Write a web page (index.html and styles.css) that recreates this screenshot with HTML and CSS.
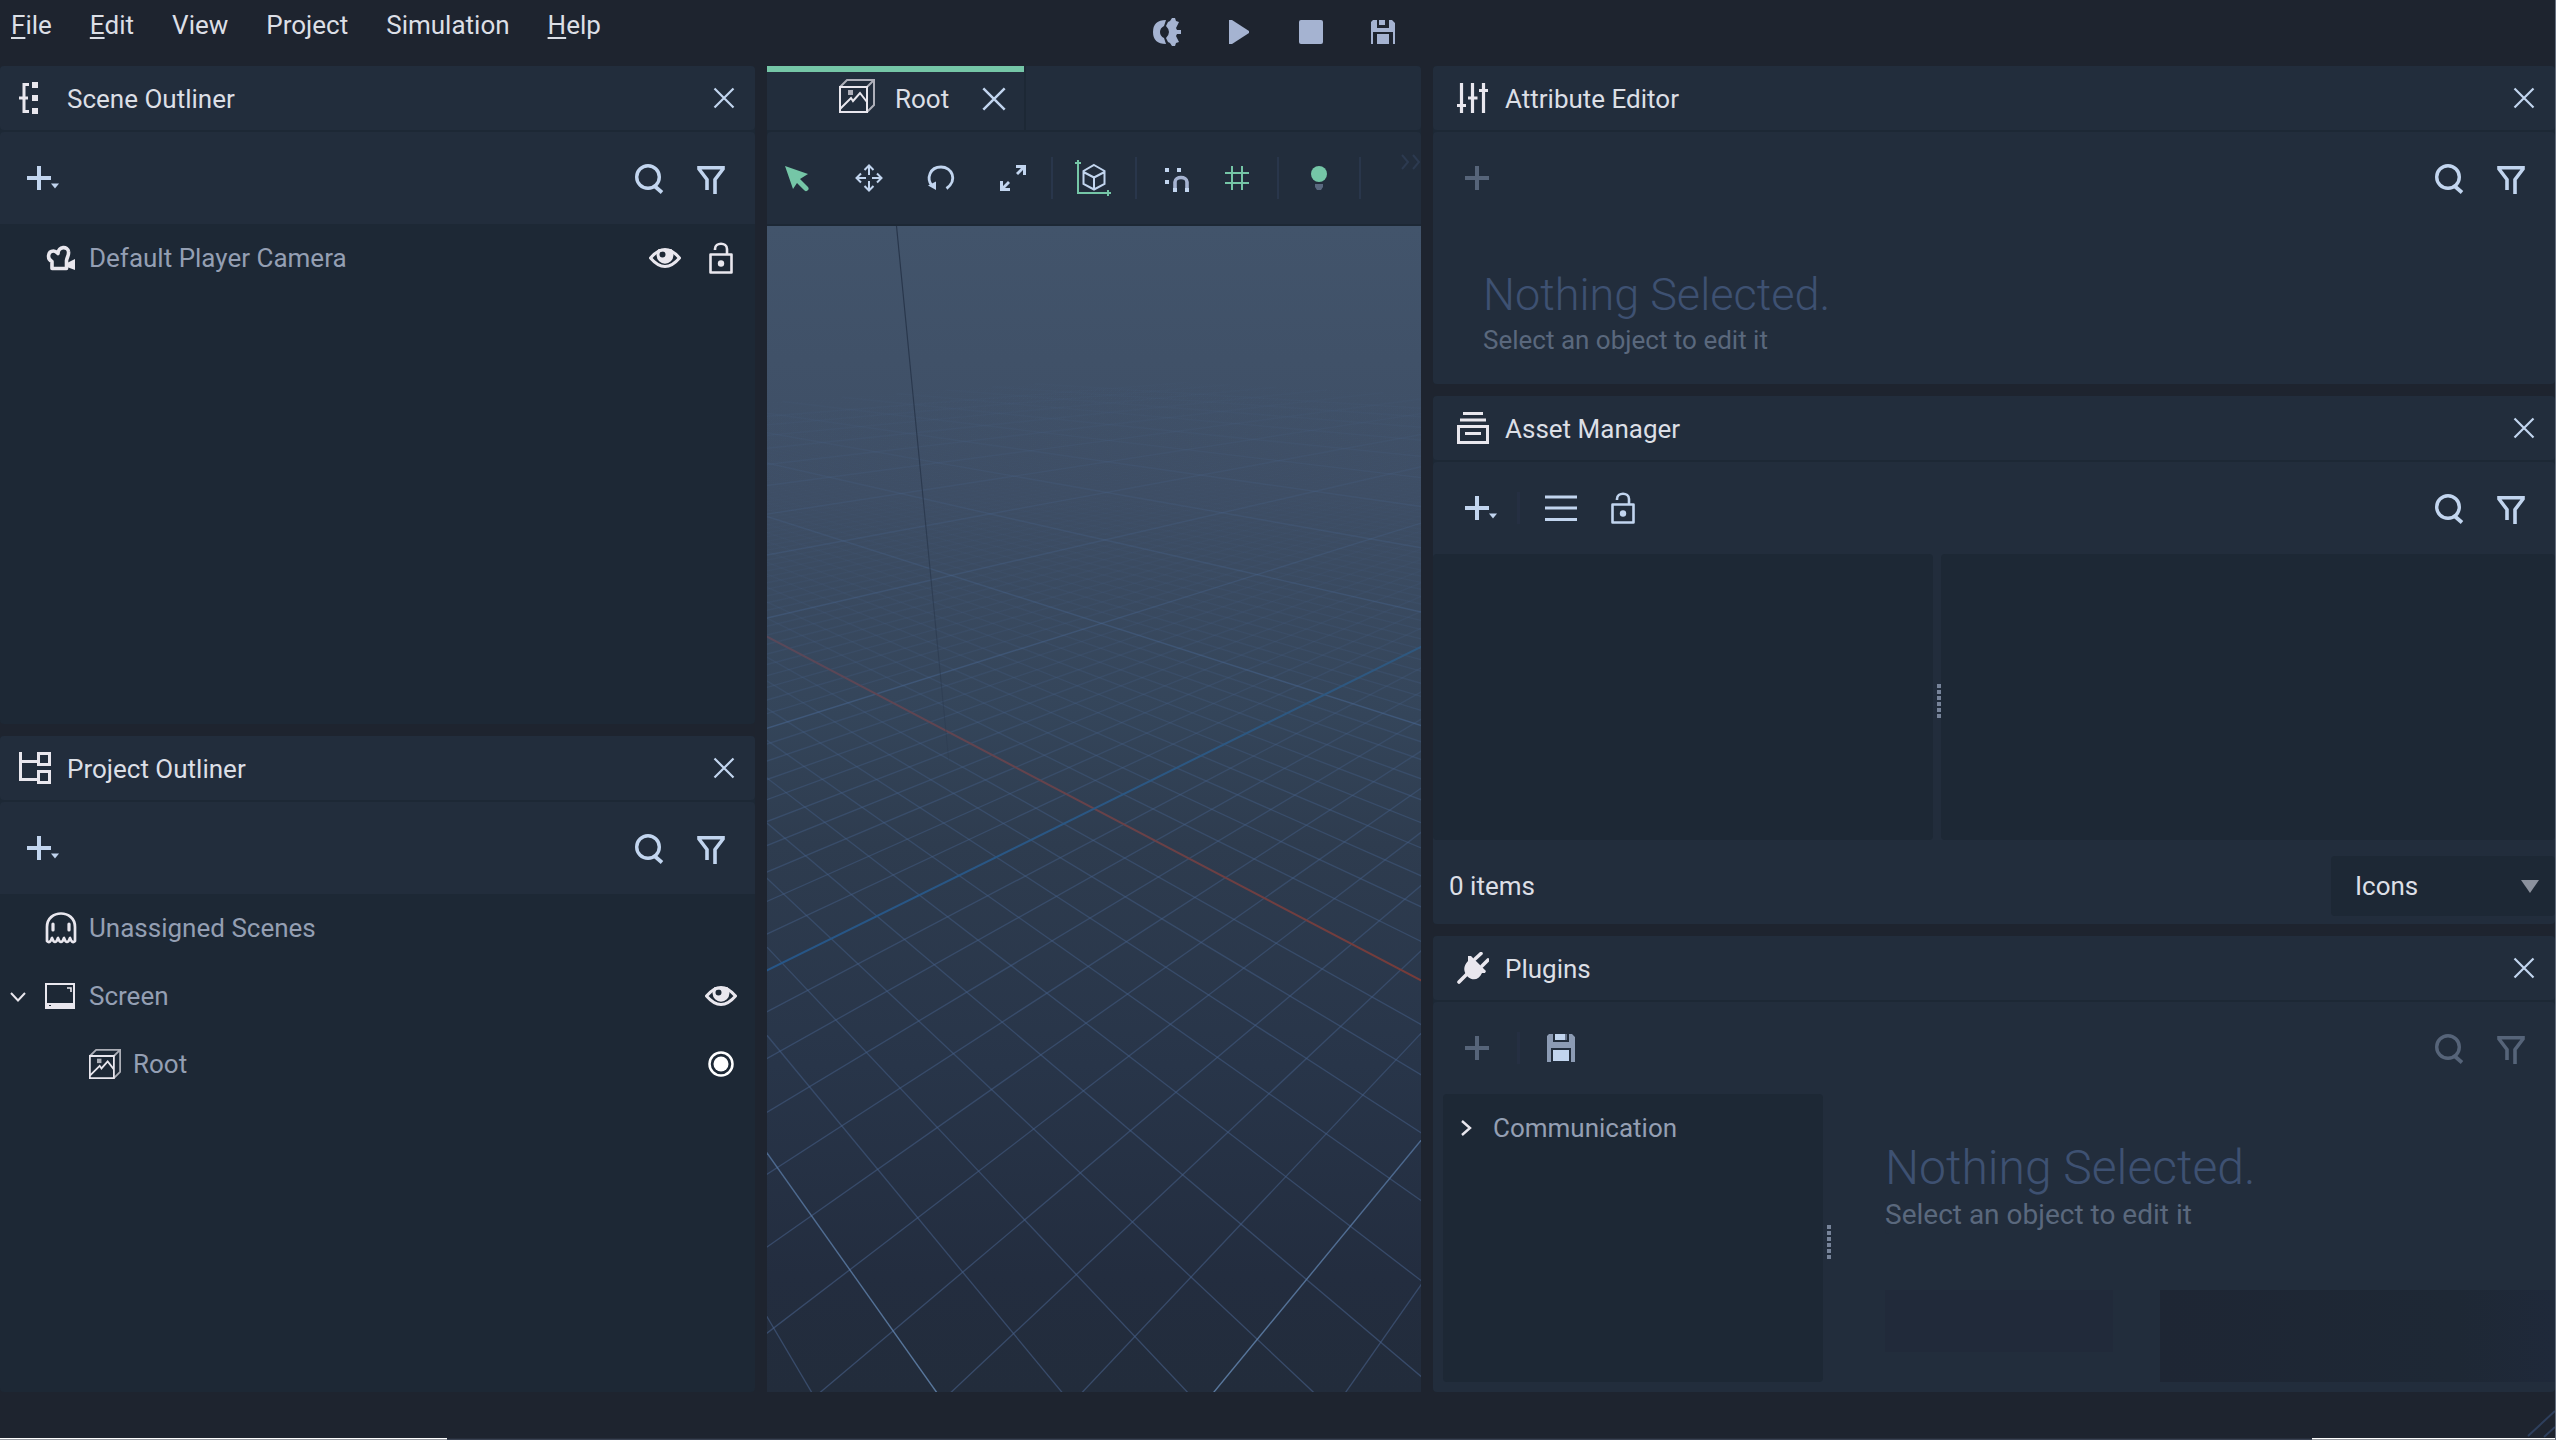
FILE: index.html
```
<!DOCTYPE html>
<html lang="en">
<head>
<meta charset="utf-8">
<meta name="viewport" content="width=device-width, initial-scale=1">
<title>Scene Editor</title>
<link rel="stylesheet" href="styles.css">
</head>
<body>
<svg class="sprite" aria-hidden="true">
  <symbol id="i-close" viewBox="0 0 32 32"><path d="M6.5 6.5l19 19M25.5 6.5l-19 19" fill="none" stroke="currentColor" stroke-width="2.2"/></symbol>
  <symbol id="i-search" viewBox="0 0 32 32"><circle cx="15" cy="15" r="11.3" fill="none" stroke="currentColor" stroke-width="3.4"/><path d="M21.5 24l7.500 6.500" stroke="currentColor" stroke-width="3.800"/></symbol>
  <symbol id="i-filter" viewBox="0 0 32 32"><path d="M12 28V17.500L4 7V5.700H28V7L20 17.500V32" fill="none" stroke="currentColor" stroke-width="3.600"/></symbol>
  <symbol id="i-plus" viewBox="0 0 40 32"><path d="M16 4v24M4 16h24" stroke="currentColor" stroke-width="4"/></symbol>
  <symbol id="i-plus-menu" viewBox="0 0 40 32"><path d="M16 4v24M4 16h24" stroke="currentColor" stroke-width="4"/><path d="M28 21.500h8l-4 5z" fill="currentColor"/></symbol>
  <symbol id="i-scene" viewBox="0 0 32 32"><path d="M10 2.500H5v27h5M0 16h9" fill="none" stroke="currentColor" stroke-width="3"/><path d="M13 0h6v6h-6zM13 13h6v6h-6zM13 26h6v6h-6z" fill="currentColor"/></symbol>
  <symbol id="i-project" viewBox="0 0 32 32"><path d="M1.500 0v27.500H18M1.500 9.500H18M19.500 1.500h11v11h-11zM19.500 19.500h11v11h-11z" fill="none" stroke="currentColor" stroke-width="3"/></symbol>
  <symbol id="i-sliders" viewBox="0 0 32 32"><path d="M4.500 1v30M15.500 1v30M26.500 1v30M0 23.500h9M11 16h9.500M22 8.500h9" fill="none" stroke="currentColor" stroke-width="3.200"/></symbol>
  <symbol id="i-assets" viewBox="0 0 32 32"><path d="M6 1.500h20M3 8h26M1.500 14.500h29v16h-29zM8 21.500h16" fill="none" stroke="currentColor" stroke-width="3"/></symbol>
  <symbol id="i-plug" viewBox="0 0 32 32"><path d="M2 30L12 20M18 7l6-5.500M25 14l6-6" stroke="currentColor" stroke-width="3.600" stroke-linecap="round"/><path d="M11 4l3 0 15 15-1 2-3 0c-3 7-9 8-14 4-5-5-5-11 0-16z" fill="currentColor"/></symbol>
  <symbol id="i-camera" viewBox="0 0 32 32"><path d="M7 26.500v-7C2 17.500 2.500 9 8.500 9c2 0 3 1 4.500 2.500C13 4 23 4 23.500 9.500c.5 4-1.500 5.500-2 9v8z" fill="none" stroke="currentColor" stroke-width="3.600" stroke-linejoin="round"/><path d="M22 21l8-4v11l-8-3z" fill="currentColor"/></symbol>
  <symbol id="i-eye" viewBox="0 0 32 32"><path d="M1.500 16Q16-1 30.500 16 16 33 1.500 16z" fill="none" stroke="currentColor" stroke-width="3"/><path fill-rule="evenodd" d="M9.500 7h13a8.500 9 0 1 1-13 0zM10.500 12.500a3 3 0 1 0 6 0 3 3 0 1 0-6 0z" fill="currentColor"/></symbol>
  <symbol id="i-lock" viewBox="0 0 32 32"><path d="M5.500 12.500h21v18h-21zM10 8V7C10 0 22 0 22 7v5" fill="none" stroke="currentColor" stroke-width="2.600" stroke-linejoin="round"/><circle cx="16" cy="21.500" r="3.200" fill="currentColor"/></symbol>
  <symbol id="i-ghost" viewBox="0 0 32 32"><path d="M2 29V15C2-3 30-3 30 15v14q-3 3-5-3-3 8-6 0-3 8-6 0-3 8-6 0-2 6-5 3z" fill="none" stroke="currentColor" stroke-width="2.700" stroke-linejoin="round"/><path d="M8 12v6M24 12v6" stroke="currentColor" stroke-width="3.200" stroke-linecap="round"/></symbol>
  <symbol id="i-screen" viewBox="0 0 32 32"><path d="M1 4h28v23H1z" fill="none" stroke="currentColor" stroke-width="2"/><path fill-rule="evenodd" d="M0 23h30v6H0zM4 25h2v2H4z" fill="currentColor"/><path d="M22 8h4v4" fill="none" stroke="currentColor" stroke-width="1.600"/></symbol>
  <symbol id="i-box" viewBox="0 0 36 36"><path d="M1 9L8 2h27v25l-7 7M28 9l7-7" fill="none" stroke="currentColor" stroke-width="2" opacity=".7"/><path d="M1 9h27v25H1zM1 31l11-11 2 3 7-8 7 9" fill="none" stroke="currentColor" stroke-width="2"/><path d="M9 12h5v5H9z" fill="currentColor" opacity=".7"/></symbol>
  <symbol id="i-down" viewBox="0 0 20 20"><path d="M3 7l7 7.500L17 7" fill="none" stroke="currentColor" stroke-width="2"/></symbol>
  <symbol id="i-right" viewBox="0 0 20 20"><path d="M6 3l8 7-8 7" fill="none" stroke="currentColor" stroke-width="2.400"/></symbol>
  <symbol id="i-radio" viewBox="0 0 32 32"><circle cx="16" cy="16" r="11.500" fill="none" stroke="currentColor" stroke-width="2.500"/><circle cx="16" cy="16" r="7.500" fill="currentColor"/></symbol>
  <symbol id="i-menu" viewBox="0 0 32 32"><path d="M0 5h32M0 16h32M0 27.500h32" stroke="currentColor" stroke-width="3"/></symbol>
  <symbol id="i-save" viewBox="0 0 32 32"><path fill-rule="evenodd" d="M6 4h4v8h12V4h3l3 3v21h-2V16H6v12H4V6z" fill="currentColor"/><path d="M12 4h6v5h-6zM10 18h12v10H10z" fill="currentColor"/></symbol>
  <symbol id="i-save-tone" viewBox="0 0 32 32"><path d="M4 2h4v8h16V2h3l3 3v25h-4V16H6v14H2V4z" fill="#8c9bb4"/><path d="M10 2h12v6H10zM8 18h16v11H8z" fill="currentColor"/><path d="M20 2h2v6h-2z" fill="#66748b"/></symbol>
  <symbol id="i-build" viewBox="0 0 32 32"><path d="M15 4Q2 4 2 16 2 28 15 28L13 22Q9 20 9 16 9 12 13 10z" fill="currentColor"/><path d="M17 6l2-1 2-3h3l1 3 3 1-3 6 1 2h4v4h-4l-1 2 3 6-3 1-1 3h-3l-2-3-2-1-2-4Q21 16 15 10z" fill="currentColor"/></symbol>
  <symbol id="i-play" viewBox="0 0 32 32"><path d="M6 4h3l17 11v2L9 28H6z" fill="currentColor"/></symbol>
  <symbol id="i-stop" viewBox="0 0 32 32"><rect x="4" y="4" width="24" height="24" rx="2" fill="currentColor"/></symbol>
  <symbol id="i-select" viewBox="0 0 32 32"><path d="M4 4l23 8-8 5 8 8a2 2 0 0 1-4 3l-7-7-4 6z" fill="currentColor"/></symbol>
  <symbol id="i-move" viewBox="0 0 32 32"><path d="M16 4v9M16 19v9M4 16h9M19 16h9M11.500 8L16 3.500 20.500 8M11.500 24l4.500 4.500 4.500-4.500M8 11.500L3.500 16 8 20.500M24 11.500l4.500 4.500-4.500 4.500" fill="none" stroke="currentColor" stroke-width="2"/></symbol>
  <symbol id="i-rotate" viewBox="0 0 32 32"><path d="M21.500 26.500C33 18 27 5 16 5 5 5 1 16 7 24" fill="none" stroke="currentColor" stroke-width="2.800"/><path d="M3 23.500l8-4v8.500z" fill="currentColor"/></symbol>
  <symbol id="i-scale" viewBox="0 0 32 32"><path d="M19 3h10v10h-3V8l-5 5-2-2 5-5h-5zM3 19h3v5l5-5 2 2-5 5h5v3H3z" fill="currentColor"/></symbol>
  <symbol id="i-local" viewBox="0 0 36 36"><path d="M3 0v33h33M0 3h6M33 30v6" fill="none" stroke="#75c6a7" stroke-width="2"/><path d="M19 5l10.500 6v13L19 29.500 8.500 24V11zM8.500 12L19 17.500 29.500 12M19 17v12" fill="none" stroke="currentColor" stroke-width="2"/></symbol>
  <symbol id="i-snap" viewBox="0 0 32 32"><path d="M4 6h4v4H4zM16 6h4v4h-4zM4 18h4v4H4zM12 26h4v4h-4zM24 26h4v4h-4z" fill="currentColor"/><path d="M14 26v-6C14 14 26 14 26 20v6" fill="none" stroke="#a5b3d1" stroke-width="3.600"/></symbol>
  <symbol id="i-grid" viewBox="0 0 32 32"><path d="M11 4v24M21 4v24M4 11h24M4 21h24" stroke="currentColor" stroke-width="2"/></symbol>
  <symbol id="i-bulb" viewBox="0 0 32 32"><circle cx="16" cy="12" r="8" fill="currentColor"/><path d="M12 22h8v3l-2 3h-4l-2-3z" fill="#5a687f"/></symbol>
  <symbol id="i-more" viewBox="0 0 20 16"><path d="M1 1l6 7-6 7M12 1l6 7-6 7" fill="none" stroke="currentColor" stroke-width="2"/></symbol>
</svg>

<header class="topbar">
  <nav class="menu" aria-label="Main menu">
    <button><u>F</u>ile</button><button><u>E</u>dit</button><button>View</button><button>Project</button><button>Simulation</button><button><u>H</u>elp</button>
  </nav>
  <div class="playbar">
    <button aria-label="Build"><svg class="icon"><use href="#i-build"/></svg></button>
    <button aria-label="Play"><svg class="icon"><use href="#i-play"/></svg></button>
    <button aria-label="Stop"><svg class="icon"><use href="#i-stop"/></svg></button>
    <button aria-label="Save"><svg class="icon"><use href="#i-save"/></svg></button>
  </div>
</header>

<main class="workspace">
  <div class="column column-left">
    <section class="panel">
      <header class="panel-head">
        <svg class="icon"><use href="#i-scene"/></svg><h2>Scene Outliner</h2>
        <button class="push" aria-label="Close"><svg class="icon"><use href="#i-close"/></svg></button>
      </header>
      <div class="toolbar">
        <button aria-label="Add"><svg class="icon icon-wide"><use href="#i-plus-menu"/></svg></button>
        <button class="push" aria-label="Search"><svg class="icon"><use href="#i-search"/></svg></button>
        <button aria-label="Filter"><svg class="icon"><use href="#i-filter"/></svg></button>
      </div>
      <ul class="tree">
        <li class="row"><span class="twisty"></span><svg class="icon"><use href="#i-camera"/></svg><span>Default Player Camera</span>
          <button class="push" aria-label="Visibility"><svg class="icon"><use href="#i-eye"/></svg></button>
          <button aria-label="Lock"><svg class="icon"><use href="#i-lock"/></svg></button></li>
      </ul>
    </section>
    <section class="panel">
      <header class="panel-head">
        <svg class="icon"><use href="#i-project"/></svg><h2>Project Outliner</h2>
        <button class="push" aria-label="Close"><svg class="icon"><use href="#i-close"/></svg></button>
      </header>
      <div class="toolbar">
        <button aria-label="Add"><svg class="icon icon-wide"><use href="#i-plus-menu"/></svg></button>
        <button class="push" aria-label="Search"><svg class="icon"><use href="#i-search"/></svg></button>
        <button aria-label="Filter"><svg class="icon"><use href="#i-filter"/></svg></button>
      </div>
      <ul class="tree">
        <li class="row"><span class="twisty"></span><svg class="icon"><use href="#i-ghost"/></svg><span>Unassigned Scenes</span></li>
        <li class="row"><button class="twisty" aria-label="Collapse"><svg><use href="#i-down"/></svg></button><svg class="icon"><use href="#i-screen"/></svg><span>Screen</span>
          <button class="push" aria-label="Visibility"><svg class="icon"><use href="#i-eye"/></svg></button></li>
        <li class="row row-child"><span class="twisty"></span><svg class="icon"><use href="#i-box"/></svg><span>Root</span>
          <button class="push active" aria-label="Active scene"><svg class="icon"><use href="#i-radio"/></svg></button></li>
      </ul>
    </section>
  </div>

  <section class="panel editor">
    <div class="tabs">
      <div class="tab"><svg class="icon icon-box"><use href="#i-box"/></svg><h2>Root</h2><button aria-label="Close tab"><svg class="icon icon-tab"><use href="#i-close"/></svg></button></div>
      <div class="tab-rest"></div>
    </div>
    <div class="toolbar tools">
      <div class="tool-group transform">
        <button class="on" aria-label="Select"><svg class="icon"><use href="#i-select"/></svg></button>
        <button aria-label="Move"><svg class="icon"><use href="#i-move"/></svg></button>
        <button aria-label="Rotate"><svg class="icon"><use href="#i-rotate"/></svg></button>
        <button aria-label="Scale"><svg class="icon"><use href="#i-scale"/></svg></button>
      </div>
      <div class="tool-group"><button aria-label="Local axes"><svg class="icon icon-box"><use href="#i-local"/></svg></button></div>
      <div class="tool-group snapping">
        <button aria-label="Snap"><svg class="icon"><use href="#i-snap"/></svg></button>
        <button class="on" aria-label="Grid"><svg class="icon"><use href="#i-grid"/></svg></button>
      </div>
      <div class="tool-group"><button class="on" aria-label="Lights"><svg class="icon"><use href="#i-bulb"/></svg></button></div>
      <button class="more push" aria-label="More tools"><svg><use href="#i-more"/></svg></button>
    </div>
    <div class="viewport">
      <svg id="scene" viewBox="767 226 654 1166" preserveAspectRatio="xMidYMid slice" role="img" aria-label="Scene viewport">
        <defs>
          <linearGradient id="minor" gradientUnits="userSpaceOnUse" x1="0" y1="330" x2="0" y2="1392">
            <stop offset="0" stop-color="#455f86" stop-opacity="0"/><stop offset=".15" stop-color="#455f86" stop-opacity=".03"/><stop offset=".3" stop-color="#45608a" stop-opacity=".2"/><stop offset=".45" stop-color="#45618c" stop-opacity=".42"/><stop offset="1" stop-color="#47608a" stop-opacity=".6"/>
          </linearGradient>
          <linearGradient id="major" gradientUnits="userSpaceOnUse" x1="0" y1="360" x2="0" y2="1392">
            <stop offset="0" stop-color="#4b6c9c" stop-opacity="0"/><stop offset=".2" stop-color="#4b6c9c" stop-opacity=".25"/><stop offset=".4" stop-color="#4b6c9c" stop-opacity=".55"/><stop offset="1" stop-color="#5f80a8" stop-opacity=".9"/>
          </linearGradient>
          <linearGradient id="axis-x" gradientUnits="userSpaceOnUse" x1="0" y1="630" x2="0" y2="990"><stop offset="0" stop-color="#58485a"/><stop offset="1" stop-color="#783b38"/></linearGradient>
          <linearGradient id="axis-z" gradientUnits="userSpaceOnUse" x1="0" y1="640" x2="0" y2="970"><stop offset="0" stop-color="#2f587f"/><stop offset="1" stop-color="#265688"/></linearGradient>
          <linearGradient id="axis-y" gradientUnits="userSpaceOnUse" x1="0" y1="226" x2="0" y2="760"><stop offset="0" stop-color="#27354a"/><stop offset=".5" stop-color="#27354a" stop-opacity=".8"/><stop offset="1" stop-color="#27354a" stop-opacity=".25"/></linearGradient>
        </defs>
      </svg>
    </div>
  </section>

  <div class="column column-right">
    <section class="panel">
      <header class="panel-head">
        <svg class="icon"><use href="#i-sliders"/></svg><h2>Attribute Editor</h2>
        <button class="push" aria-label="Close"><svg class="icon"><use href="#i-close"/></svg></button>
      </header>
      <div class="toolbar">
        <button disabled aria-label="Add"><svg class="icon icon-wide"><use href="#i-plus"/></svg></button>
        <button class="push" aria-label="Search"><svg class="icon"><use href="#i-search"/></svg></button>
        <button aria-label="Filter"><svg class="icon"><use href="#i-filter"/></svg></button>
      </div>
      <div class="empty"><h3>Nothing Selected.</h3><p>Select an object to edit it</p></div>
    </section>

    <section class="panel">
      <header class="panel-head">
        <svg class="icon"><use href="#i-assets"/></svg><h2>Asset Manager</h2>
        <button class="push" aria-label="Close"><svg class="icon"><use href="#i-close"/></svg></button>
      </header>
      <div class="toolbar">
        <button aria-label="Add"><svg class="icon icon-wide"><use href="#i-plus-menu"/></svg></button>
        <span class="rule"></span>
        <button aria-label="List"><svg class="icon"><use href="#i-menu"/></svg></button>
        <button aria-label="Lock"><svg class="icon"><use href="#i-lock"/></svg></button>
        <button class="push" aria-label="Search"><svg class="icon"><use href="#i-search"/></svg></button>
        <button aria-label="Filter"><svg class="icon"><use href="#i-filter"/></svg></button>
      </div>
      <div class="assets"><div class="well"></div><div class="splitter"><i class="grip"></i></div><div class="well"></div></div>
      <footer class="asset-foot">
        <label for="view-mode">0 items</label>
        <div class="select"><select id="view-mode"><option>Icons</option><option>List</option></select></div>
      </footer>
    </section>

    <section class="panel">
      <header class="panel-head">
        <svg class="icon"><use href="#i-plug"/></svg><h2>Plugins</h2>
        <button class="push" aria-label="Close"><svg class="icon"><use href="#i-close"/></svg></button>
      </header>
      <div class="toolbar">
        <button disabled aria-label="Add"><svg class="icon icon-wide"><use href="#i-plus"/></svg></button>
        <span class="rule"></span>
        <button aria-label="Save"><svg class="icon"><use href="#i-save-tone"/></svg></button>
        <button disabled class="push" aria-label="Search"><svg class="icon"><use href="#i-search"/></svg></button>
        <button disabled aria-label="Filter"><svg class="icon"><use href="#i-filter"/></svg></button>
      </div>
      <div class="plugins">
        <ul class="well plugin-list"><li class="row"><button class="twisty" aria-label="Expand"><svg><use href="#i-right"/></svg></button><span>Communication</span></li></ul>
        <div class="splitter"><i class="grip"></i></div>
        <div class="plugin-detail">
          <div class="empty empty-large"><h3>Nothing Selected.</h3><p>Select an object to edit it</p></div>
          <div class="fields"><div class="field-label"></div><div class="field-value"></div></div>
        </div>
      </div>
    </section>
  </div>
</main>

<footer class="status">
  <svg class="resize" viewBox="0 0 28 28" aria-hidden="true"><path d="M1 26L28 1M17 27l11-10" stroke="#2e3f5c" stroke-width="2"/></svg>
  <div class="edge"><span class="edge-left"></span><span class="edge-right"></span></div>
</footer>
<script src="scene.js"></script>
</body>
</html>
```
FILE: styles.css
```
:root {
  --bg: #1e242f;
  --panel: #222d3c;
  --well: #1d2835;
  --text: #dcdfe6;
  --muted: #949fb3;
  --tool: #c2d5ef;
  --icon: #e9e7ee;
  --green: #75c6a7;
  --disabled: #566479;
}
* { box-sizing: border-box; }
body {
  margin: 0;
  min-height: 100vh;
  display: flex;
  flex-direction: column;
  background: var(--bg);
  color: var(--text);
  font: 400 26px/32px Roboto, sans-serif;
  border-right: 1px solid #687180;
}
h2, h3, p, ul { margin: 0; padding: 0; font: inherit; }
ul { list-style: none; }
button { margin: 0; padding: 0; border: 0; background: none; color: inherit; font: inherit; display: flex; align-items: center; }
svg { display: block; }
.sprite { display: none; }
.icon { width: 32px; height: 32px; flex: none; }
.icon-wide { width: 40px; }
.icon-box { width: 36px; height: 36px; }
.icon-tab { width: 36px; height: 36px; }
.push { margin-left: auto; }

.topbar { display: grid; grid-template-columns: 1fr auto 1fr; height: 66px; padding: 0 16px 0 11px; }
.menu { display: flex; gap: 38px; height: 50px; }
.menu u { text-decoration-thickness: 2px; text-underline-offset: 3px; text-decoration-skip-ink: none; }
.playbar { display: flex; gap: 40px; height: 64px; color: #a5b3d1; }

.workspace { flex: 1; display: grid; grid-template-columns: 755fr 654fr 1122fr; gap: 12px; }
.column { display: grid; gap: 12px; min-width: 0; }
.column-left { grid-template-rows: 658fr 656fr; }
.column-right { grid-template-rows: 318fr 528fr 456fr; }
.panel { display: flex; flex-direction: column; min-width: 0; background: var(--well); border-radius: 4px; }
.panel-head { display: flex; align-items: center; gap: 16px; height: 64px; padding: 0 15px 0 24px; margin-bottom: 2px; background: var(--panel); border-radius: 4px; }
.panel-head h2 { padding-top: 2px; }
.panel-head .icon { color: var(--icon); }
.panel-head button .icon { color: var(--tool); }
.toolbar { display: flex; align-items: center; gap: 30px; height: 92px; padding: 0 28px; background: var(--panel); color: var(--tool); border-radius: 4px 4px 0 0; }
.column-left .panel-head { padding-left: 19px; }
.column-left .toolbar { padding-left: 23px; }
.toolbar button:disabled { color: var(--disabled); }
.rule { width: 3px; height: 32px; margin: 0 -5px 0 -14px; background: #252f42; }

.row { display: flex; align-items: center; height: 68px; padding: 0 18px 0 8px; color: var(--muted); }
.row .icon { margin-right: 12px; color: var(--icon); }
.row button .icon { margin-right: 0; }
.row button + button { margin-left: 24px; }
.row .active .icon { color: #fff; }
.row-child { padding-left: 52px; }
.twisty { width: 20px; height: 20px; margin-right: 17px; color: var(--icon); }
.twisty svg { width: 20px; height: 20px; }

.tabs { display: flex; gap: 2px; height: 64px; margin-bottom: 2px; }
.tab { display: flex; align-items: center; width: 257px; padding-left: 72px; background: var(--panel); border-top: 6px solid var(--green); }
.tab h2 { margin: 0 27px 0 20px; padding-bottom: 4px; }
.tab .icon { margin-bottom: 10px; color: var(--icon); }
.tab button .icon { margin-bottom: 4px; color: var(--tool); }
.tab-rest { flex: 1; background: var(--panel); border-radius: 0 4px 4px 0; }
.tools { gap: 0; padding: 0 0 0 14px; margin-bottom: 2px; }
.tool-group { display: flex; align-items: center; height: 42px; padding-right: 24px; margin-right: 24px; border-right: 2px solid #29364b; }
.transform { gap: 40px; padding-right: 22px; margin-right: 22px; }
.snapping { gap: 28px; }
.on { color: var(--green); }
.more { align-self: flex-start; margin-top: 22px; color: #2c3a50; }
.more svg { width: 20px; height: 16px; }
.viewport { flex: 1; position: relative; overflow: hidden; background: linear-gradient(#42546b 0%, #3e4e65 23%, #34455a 42%, #2e3c4f 53%, #283549 72%, #232d3f 90%, #222c3b 100%); }
.viewport svg { position: absolute; inset: 0; width: 100%; height: 100%; }

.empty { flex: 1; padding: 44px 0 0 50px; background: var(--panel); border-radius: 0 0 4px 4px; }
.empty h3 { font-weight: 300; font-size: 45px; line-height: 54px; color: #3e5172; }
.empty p { line-height: 36px; color: #5a687d; }
.empty-large { flex: none; padding: 46px 0 0; }
.empty-large h3 { font-size: 48px; line-height: 56px; }
.empty-large p { font-size: 28px; line-height: 38px; }

.assets { flex: 1; display: grid; grid-template-columns: 500fr 8px 614fr; background: var(--panel); }
.well { background: var(--well); border-radius: 4px; }
.splitter { display: flex; align-items: center; justify-content: flex-end; padding-top: 8px; }
.grip { width: 4px; height: 34px; background: repeating-linear-gradient(#77849a 0 4px, transparent 4px 6px); }
.asset-foot { display: flex; align-items: center; justify-content: space-between; height: 84px; padding: 8px 0 0 16px; background: var(--panel); border-radius: 0 0 4px 4px; }
.select { position: relative; width: 224px; height: 60px; }
.select select { appearance: none; width: 100%; height: 100%; padding: 0 24px; border: 0; border-radius: 4px; background: var(--well); color: var(--text); font: inherit; }
.select::after { content: ""; position: absolute; right: 16px; top: 24px; width: 18px; height: 13px; background: #8b919d; clip-path: polygon(0 0, 100% 0, 50% 100%); pointer-events: none; }

.plugins { flex: 1; display: flex; padding: 0 0 10px 10px; background: var(--panel); border-radius: 0 0 4px 4px; }
.plugin-list { width: 380px; }
.plugin-list .row { padding-left: 13px; }
.plugins .splitter { width: 8px; }
.plugin-detail { flex: 1; display: flex; flex-direction: column; justify-content: space-between; padding-left: 54px; }
.fields { display: flex; justify-content: space-between; height: 92px; }
.field-label { width: 34%; height: 62px; background: #212a3a; }
.field-value { width: 59%; background: linear-gradient(90deg, #1e2634, #1e2835 75%, #1f293a); }

.status { height: 48px; display: flex; flex-direction: column; justify-content: flex-end; align-items: flex-end; }
.resize { width: 28px; height: 28px; }
.edge { align-self: stretch; display: flex; justify-content: space-between; height: 2px; background: linear-gradient(#262d3a 50%, #3a4252 50%); }
.edge-left { width: 17.500%; background: linear-gradient(#fff 50%, #9a9da3 50%); }
.edge-right { width: 9.500%; background: linear-gradient(#fff 50%, #9a9da3 50%); }
```
FILE: scene.js
```
// Perspective floor grid: world cells (i, j) are projected to the viewport plane.
const svg = document.getElementById('scene');

const depth = (i, j) => 1 - 0.0315 * i - 0.0295 * j;
const project = (i, j) => {
  const w = depth(i, j);
  return [(1094.3 - 5.8 * i - 62.1 * j) / w, (808.6 - 10.4 * i - 9.1 * j) / w];
};

function segment(a, b, stroke, width) {
  const line = document.createElementNS('http://www.w3.org/2000/svg', 'line');
  line.setAttribute('x1', a[0].toFixed(1));
  line.setAttribute('y1', a[1].toFixed(1));
  line.setAttribute('x2', b[0].toFixed(1));
  line.setAttribute('y2', b[1].toFixed(1));
  line.setAttribute('stroke', stroke);
  line.setAttribute('stroke-width', width);
  svg.appendChild(line);
}

const FAR = -120;
const NEAR_DEPTH = 0.15;

function gridLine(k, stroke, width, alongI) {
  // The near end stops where the line comes too close to the camera.
  const limit = alongI ? (1 - 0.0295 * k - NEAR_DEPTH) / 0.0315 : (1 - 0.0315 * k - NEAR_DEPTH) / 0.0295;
  if (limit <= FAR) return;
  const a = alongI ? project(FAR, k) : project(k, FAR);
  const b = alongI ? project(limit, k) : project(k, limit);
  segment(a, b, stroke, width);
}

for (const major of [false, true]) {
  for (let k = -100; k <= 20; k++) {
    if (k === 0 || (k % 10 === 0) !== major) continue;
    const stroke = major ? 'url(#major)' : 'url(#minor)';
    gridLine(k, stroke, major ? 1.4 : 1.3, true);
    gridLine(k, stroke, major ? 1.4 : 1.3, false);
  }
}
gridLine(0, 'url(#axis-x)', 2, true);
gridLine(0, 'url(#axis-z)', 2, false);
segment([896.5, 226], [948.7, 760], 'url(#axis-y)', 1.2);
```
